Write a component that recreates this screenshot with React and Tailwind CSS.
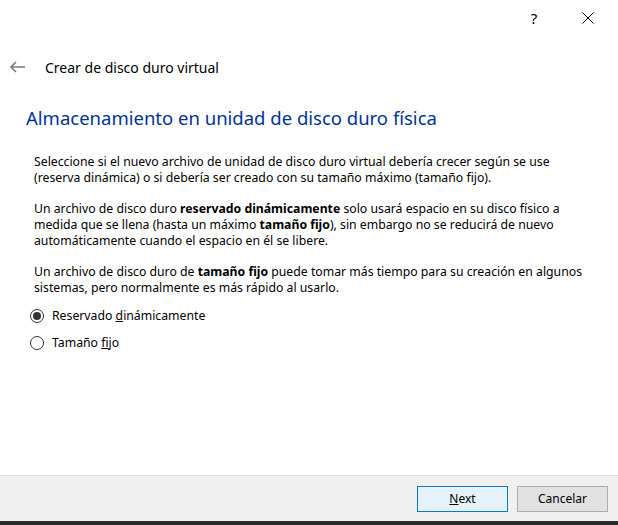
import React, { useState } from 'react'

function Radio({ checked, onClick, children }) {
    return (
        <div className="flex items-center h-[27px] cursor-default" onClick={onClick}>
            <span className="w-[14px] h-[14px] rounded-full border border-[#333] bg-white flex items-center justify-center">
                {checked && <span className="w-[8px] h-[8px] rounded-full bg-[#333]"></span>}
            </span>
            <span className="ml-[8px]">{children}</span>
        </div>
    )
}

export default function App() {
    const [mode, setMode] = useState('dynamic')

    return (
        <div className="w-[618px] h-[525px] flex flex-col bg-white text-black font-['Segoe_UI','Noto_Sans',sans-serif] overflow-hidden">
            {/* title bar */}
            <div className="h-[36px] flex justify-end items-center shrink-0">
                <span className="w-[20px] text-center text-[15px] text-black mr-[38px] leading-none">?</span>
                <svg width="12" height="12" viewBox="0 0 12 12" className="mr-[24px]">
                    <path d="M0.5 0.5 L11.5 11.5 M11.5 0.5 L0.5 11.5" stroke="#000" strokeWidth="1" />
                </svg>
            </div>

            {/* header */}
            <div className="flex items-center h-[30px] mt-[16px]">
                <svg width="16" height="12" viewBox="0 0 16 12" className="ml-[10px]">
                    <path d="M1 6 H15 M6 1 L1 6 L6 11" stroke="#7a7a7a" strokeWidth="1.6" fill="none" />
                </svg>
                <span className="ml-[19px] text-[14px]">Crear de disco duro virtual</span>
            </div>

            <div className="flex-1 pl-[26px] pr-[20px]">
                <h1 className="mt-[22px] text-[18.5px] leading-[28px] text-[#003399] font-normal">
                    Almacenamiento en unidad de disco duro física
                </h1>

                <div className="ml-[8px] mt-[22px] text-[12.25px] leading-[16px] whitespace-nowrap">
                    <p>
                        Seleccione si el nuevo archivo de unidad de disco duro virtual debería crecer según se use<br />
                        (reserva dinámica) o si debería ser creado con su tamaño máximo (tamaño fijo).
                    </p>
                    <p className="mt-[15px]">
                        Un archivo de disco duro <b>reservado dinámicamente</b> solo usará espacio en su disco físico a<br />
                        medida que se llena (hasta un máximo <b>tamaño fijo</b>), sin embargo no se reducirá de nuevo<br />
                        automáticamente cuando el espacio en él se libere.
                    </p>
                    <p className="mt-[15px]">
                        Un archivo de disco duro de <b>tamaño fijo</b> puede tomar más tiempo para su creación en algunos<br />
                        sistemas, pero normalmente es más rápido al usarlo.
                    </p>

                    <div className="mt-[6px] -ml-[4px]">
                        <Radio checked={mode === 'dynamic'} onClick={() => setMode('dynamic')}>
                            Reservado <u>d</u>inámicamente
                        </Radio>
                        <Radio checked={mode === 'fixed'} onClick={() => setMode('fixed')}>
                            Tamaño <u>f</u>ijo
                        </Radio>
                    </div>
                </div>
            </div>

            {/* footer */}
            <div className="h-[46px] shrink-0 bg-[#f0f0f0] border-t border-[#dfdfdf] flex justify-end items-start pt-[10px] pr-[10px] gap-[9px] text-[12px]">
                <button className="w-[91px] h-[26px] bg-[#e5f1fb] border border-[#0078d7]">
                    <u>N</u>ext
                </button>
                <button className="w-[91px] h-[26px] bg-[#e1e1e1] border border-[#adadad]">
                    Cancelar
                </button>
            </div>
            <div className="h-[4px] shrink-0 bg-[#2b2b2b]"></div>
        </div>
    )
}
